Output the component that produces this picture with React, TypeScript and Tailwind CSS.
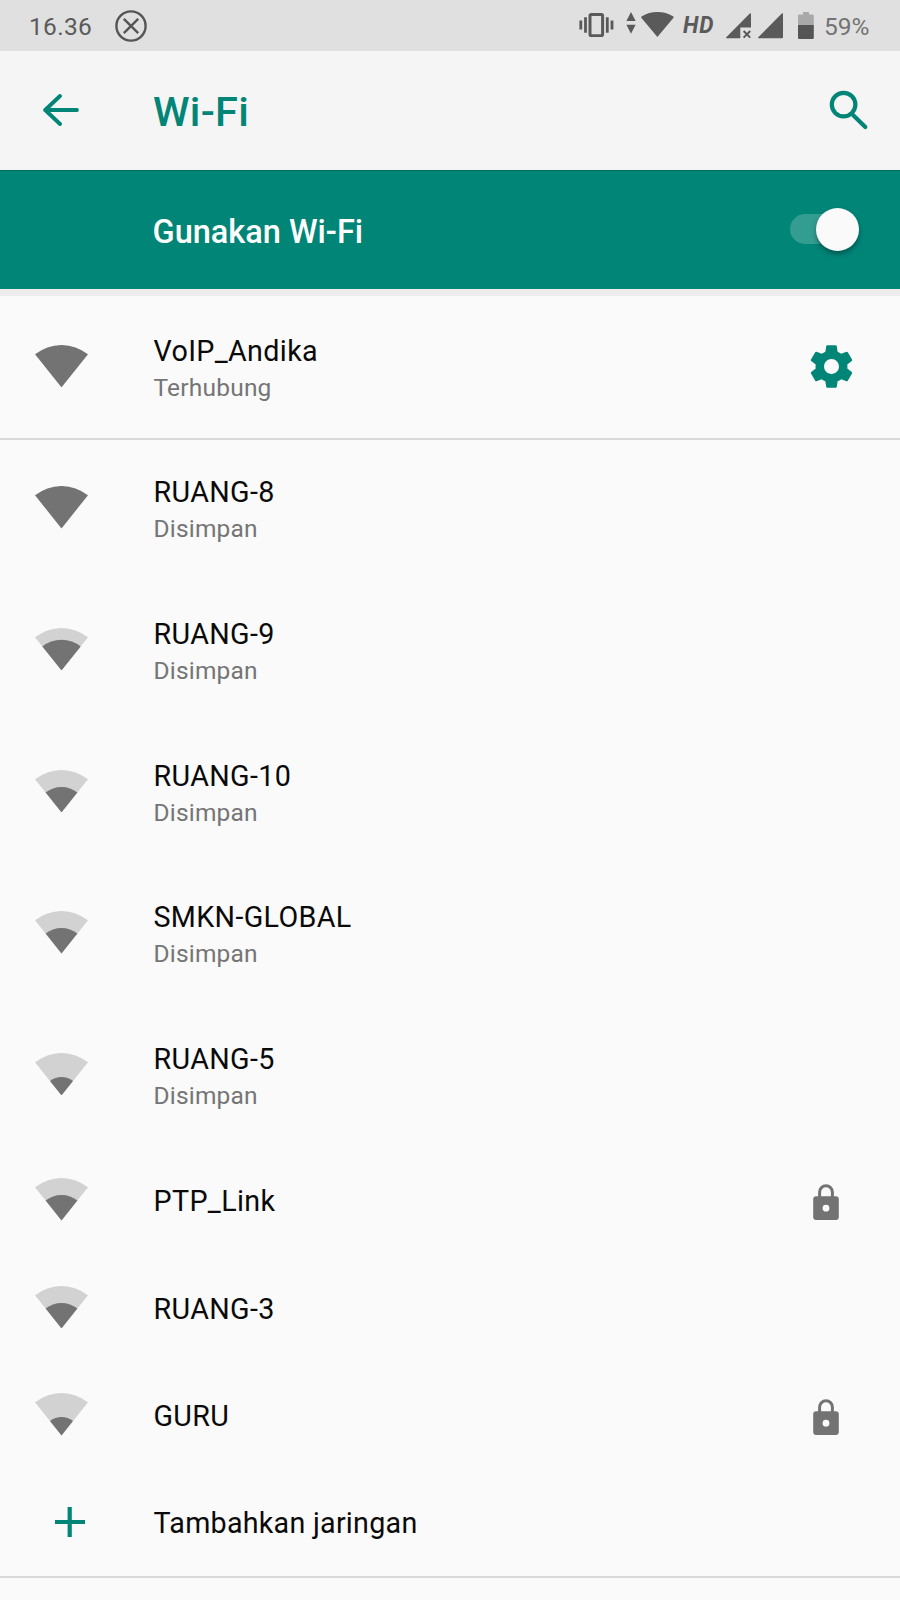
import React from 'react';

interface Network {
  name: string;
  status?: string;
  level: number;
  secured?: boolean;
}

const connected: Network = { name: 'VoIP_Andika', status: 'Terhubung', level: 4 };

const networks: Network[] = [
  { name: 'RUANG-8', status: 'Disimpan', level: 4 },
  { name: 'RUANG-9', status: 'Disimpan', level: 3 },
  { name: 'RUANG-10', status: 'Disimpan', level: 2 },
  { name: 'SMKN-GLOBAL', status: 'Disimpan', level: 2 },
  { name: 'RUANG-5', status: 'Disimpan', level: 1 },
  { name: 'PTP_Link', level: 2, secured: true },
  { name: 'RUANG-3', level: 2 },
  { name: 'GURU', level: 1, secured: true },
];

// radius of the filled part for each signal level
const radii = [0, 18.4, 25.4, 30.7, 42.4];

const wedge = (r: number) => {
  const dx = (r * 26.5) / 42.4;
  const dy = (r * 33.1) / 42.4;
  return `M26.5 42.4L${26.5 - dx} ${42.4 - dy}A${r} ${r} 0 0 1 ${26.5 + dx} ${42.4 - dy}Z`;
};

const WifiIcon: React.FC<{ level: number }> = ({ level }) => (
  <svg className="w-[53px] h-[42.4px]" viewBox="0 0 53 42.4">
    {level < 4 && <path d={wedge(42.4)} fill="#d2d2d2" />}
    <path d={wedge(radii[level])} fill="#737373" />
  </svg>
);

const GearIcon: React.FC = () => (
  <svg className="mr-[43px] h-[51px] w-[51px]" viewBox="0 0 24 24" fill="#008577">
    <path d="M19.43 12.98c.04-.32.07-.64.07-.98s-.03-.66-.07-.98l2.11-1.65c.19-.15.24-.42.12-.64l-2-3.46c-.12-.22-.39-.3-.61-.22l-2.49 1c-.52-.4-1.08-.73-1.69-.98l-.38-2.65C14.46 2.18 14.25 2 14 2h-4c-.25 0-.46.18-.49.42l-.38 2.65c-.61.25-1.17.59-1.69.98l-2.49-1c-.23-.09-.49 0-.61.22l-2 3.46c-.13.22-.07.49.12.64l2.11 1.65c-.04.32-.07.65-.07.98s.03.66.07.98l-2.11 1.65c-.19.15-.24.42-.12.64l2 3.46c.12.22.39.3.61.22l2.49-1c.52.4 1.08.73 1.69.98l.38 2.65c.03.24.24.42.49.42h4c.25 0 .46-.18.49-.42l.38-2.65c.61-.25 1.17-.59 1.69-.98l2.49 1c.23.09.49 0 .61-.22l2-3.46c.12-.22.07-.49-.12-.64l-2.11-1.65zM12 15.5c-1.93 0-3.5-1.57-3.5-3.5s1.57-3.5 3.5-3.5 3.5 1.57 3.5 3.5-1.57 3.5-3.5 3.5z" />
  </svg>
);

const LockIcon: React.FC = () => (
  <svg className="w-[26px] h-9" viewBox="0 0 26 36">
    <path d="M6.6 13.5V8.2a6.4 6.4 0 0 1 12.8 0v5.3" fill="none" stroke="#737373" strokeWidth="3" />
    <path
      fill="#737373"
      fillRule="evenodd"
      d="M3.2 12.2h19.6a3 3 0 0 1 3 3v17.8a3 3 0 0 1-3 3H3.2a3 3 0 0 1-3-3V15.2a3 3 0 0 1 3-3zM13 20.8a3.4 3.4 0 1 0 0 6.8a3.4 3.4 0 1 0 0-6.8z"
    />
  </svg>
);

const StatusBar: React.FC = () => (
  <div className="flex h-[51px] shrink-0 items-center bg-[#e0e0e0] text-[#5a5a5a]">
    <span className="ml-[29px] mt-[3px] w-[84px] text-[24.5px] leading-none tracking-[0.3px]">16.36</span>
    <svg className="ml-[2px] h-8 w-8" viewBox="0 0 32 32" fill="none" stroke="#555" strokeWidth="2.4">
      <circle cx="16" cy="16" r="14.6" />
      <path d="M8.8 8.8l14.4 14.4M23.2 8.8L8.8 23.2" />
    </svg>
    {/* vibrate */}
    <svg className="ml-[432px] mt-[-2px] h-6 w-[35px]" viewBox="0 0 35 24" fill="none" stroke="#5a5a5a">
      <rect x="11" y="1.5" width="12.6" height="21.2" rx="1.2" strokeWidth="3" />
      <path d="M1.8 7.5v9M6.5 4.3v15.5M28.3 4.3v15.5M33 7.5v9" strokeWidth="2.8" />
    </svg>
    <svg className="ml-[12px] mt-[-6px] h-[22px] w-[10px]" viewBox="0 0 10 22" fill="#5a5a5a">
      <path d="M5 0l4.6 9H.4zM5 21.8L.4 12.8h9.2z" />
    </svg>
    <svg className="ml-[5px] mt-[-2px] h-[25px] w-[33px]" viewBox="0 0 33 25" fill="#5a5a5a">
      <path d="M16.4 25L.3 5.8Q-.1 4.9.9 4.3Q7.5 0 16.4 0T32 4.3Q33 4.9 32.5 5.8z" />
    </svg>
    <span className="ml-[9px] w-[33px] origin-left scale-x-[0.92] text-[24.5px] font-bold italic leading-none tracking-[0.8px]">HD</span>
    <svg className="ml-[9.6px] h-[26px] w-[26px]" viewBox="0 0 26 26" fill="#5a5a5a">
      <path d="M0 24.6L23.8.6q1.2-.8 1.2.4v13.5H14.3v10.7H.6q-1 0-.6-.6z" />
      <path d="M17.6 18l6.6 6.6M24.2 18l-6.6 6.6" stroke="#5a5a5a" strokeWidth="2" />
    </svg>
    <svg className="ml-[6px] h-[26px] w-[26px]" viewBox="0 0 26 26" fill="#5a5a5a">
      <path d="M0 24.6L23.8.6q1.2-.8 1.2.4v23.2q0 1-1 1H.6q-1 0-.6-.6z" />
    </svg>
    <svg className="ml-[14.4px] h-[27px] w-4" viewBox="0 0 16 27">
      <path d="M5 0h6v2.6h3.6q1.2 0 1.2 1.2V13H0V3.8q0-1.2 1.2-1.2H5z" fill="#a9a9a9" />
      <path d="M0 13h15.8v12.8q0 1.2-1.2 1.2H1.2Q0 27 0 25.8z" fill="#555" />
    </svg>
    <span className="ml-[10px] mt-[3px] text-[24.5px] leading-none text-[#737373]">59%</span>
  </div>
);

const Header: React.FC = () => (
  <div className="flex h-[119px] shrink-0 items-center bg-[#f5f5f5] text-[#008577]">
    <svg className="ml-[42px] mt-[-1px] h-8 w-[37px]" viewBox="0 0 37 32" fill="none" stroke="#008577" strokeWidth="3.8" strokeLinecap="round" strokeLinejoin="round">
      <path d="M35 16H3M18 2L3.2 16L18 30" />
    </svg>
    <h1 className="ml-[74px] mt-[3px] grow text-[41.5px] font-medium leading-none tracking-[0.3px]">Wi-Fi</h1>
    <svg className="mr-[31px] mt-[-2px] h-[40px] w-[40px]" viewBox="0 0 40 40" fill="none" stroke="#008577" strokeWidth="4.2" strokeLinecap="round">
      <circle cx="14.6" cy="14.6" r="11.8" />
      <path d="M24.5 25.5L36.3 37" />
    </svg>
  </div>
);

const NetworkRow: React.FC<{ network: Network; children?: React.ReactNode }> = ({ network, children }) => (
  <div className={`flex shrink-0 items-center ${network.status ? 'h-[141.67px]' : 'h-[107.5px]'}`}>
    <div className={`ml-[35.4px] w-[118.1px] ${network.status ? 'mt-[-2px]' : ''}`}>
      <WifiIcon level={network.level} />
    </div>
    <div className={`grow ${network.status ? 'mt-[5px]' : 'mt-[4px]'}`}>
      <p className="text-[28.7px] leading-[37px] tracking-[0.35px] text-[#0a0a0a]">{network.name}</p>
      {network.status && (
        <p className="text-[24.5px] leading-[36px] tracking-[0.2px] text-[#757575]">{network.status}</p>
      )}
    </div>
    {network.secured && (
      <div className="mr-[61px] mt-[4px]">
        <LockIcon />
      </div>
    )}
    {children}
  </div>
);

export default function App() {
  return (
    <div className="flex h-[1600px] w-[900px] flex-col overflow-hidden bg-[#fafafa] font-['Roboto',sans-serif]">
      <StatusBar />
      <Header />

      <div className="flex h-[119px] shrink-0 items-center border-t border-[#006d61] bg-[#008577]">
        <span className="ml-[152.5px] mt-[4px] grow text-[32.5px] font-medium leading-none text-white">Gunakan Wi-Fi</span>
        <div className="mr-[41px] mt-[-2px] flex h-[30px] w-[69px] items-center justify-end rounded-full bg-[#339d92]">
          <div className="h-[43px] w-[43px] shrink-0 rounded-full bg-[#fafafa] shadow-[0_3px_5px_rgba(0,0,0,0.35)]" />
        </div>
      </div>
      <div className="h-[7px] shrink-0 bg-[#ededed]" />

      <NetworkRow network={connected}>
        <GearIcon />
      </NetworkRow>
      <div className="z-10 mb-[-2px] h-[2px] shrink-0 bg-[#d9d9d9]" />
      {networks.map((network) => (
        <NetworkRow key={network.name} network={network} />
      ))}

      <div className="flex h-[107.5px] shrink-0 items-center">
        <svg className="ml-[54.5px] h-[30px] w-[30px]" viewBox="0 0 30 30" stroke="#008577" strokeWidth="4.2">
          <path d="M0 15h30M14.7 0v30" />
        </svg>
        <span className="ml-[69px] mt-[3px] text-[28.7px] leading-[37px] tracking-[0.25px] text-[#0a0a0a]">Tambahkan jaringan</span>
      </div>
      <div className="h-[2px] shrink-0 bg-[#d9d9d9]" />
    </div>
  );
}
